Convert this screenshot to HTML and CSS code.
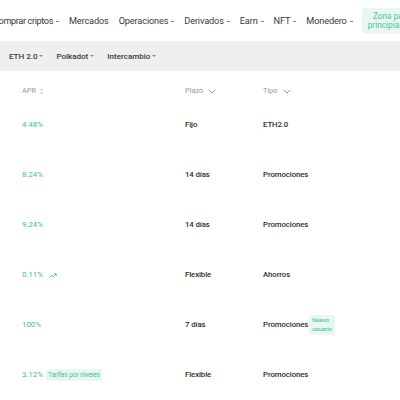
FILE: index.html
```html
<!DOCTYPE html>
<html lang="es">
<head>
    <meta charset="UTF-8">
    <meta name="viewport" content="width=device-width, initial-scale=1.0">
    <title>Earn - Staking</title>
    <link rel="stylesheet" href="styles.css">
</head>
<body>
    <header class="topnav">
        <a class="nav-item first">Comprar criptos<span class="caret"></span></a>
        <a class="nav-item">Mercados</a>
        <a class="nav-item">Operaciones<span class="caret"></span></a>
        <a class="nav-item">Derivados<span class="caret"></span></a>
        <a class="nav-item">Earn<span class="caret"></span></a>
        <a class="nav-item">NFT<span class="caret"></span></a>
        <a class="nav-item">Monedero<span class="caret"></span></a>
        <a class="beginner">Zona para<br>principiantes</a>
    </header>

    <nav class="tabs">
        <a class="tab">ETH 2.0<span class="tri"></span></a>
        <a class="tab">Polkadot<span class="tri"></span></a>
        <a class="tab">Intercambio<span class="tri"></span></a>
    </nav>

    <main class="products">
        <div class="row head">
            <div class="cell">APR
                <svg class="sort" width="5" height="7" viewBox="0 0 5 7"><path d="M2.5 0.5L4.5 2.6H0.5Z M2.5 6.5L4.5 4.4H0.5Z" fill="#cfcfcf"/></svg>
            </div>
            <div class="cell">Plazo
                <svg class="chev" width="8" height="5" viewBox="0 0 8 5"><path d="M0.7 0.8L4 4L7.3 0.8" fill="none" stroke="#999" stroke-width="1"/></svg>
            </div>
            <div class="cell">Tipo
                <svg class="chev" width="8" height="5" viewBox="0 0 8 5"><path d="M0.7 0.8L4 4L7.3 0.8" fill="none" stroke="#999" stroke-width="1"/></svg>
            </div>
        </div>

        <div class="row">
            <div class="cell apr">4.48%</div>
            <div class="cell term">Fijo</div>
            <div class="cell kind">ETH2.0</div>
        </div>
        <div class="row">
            <div class="cell apr">8.24%</div>
            <div class="cell term">14 días</div>
            <div class="cell kind">Promociones</div>
        </div>
        <div class="row">
            <div class="cell apr">9.24%</div>
            <div class="cell term">14 días</div>
            <div class="cell kind">Promociones</div>
        </div>
        <div class="row">
            <div class="cell apr">0.11%
                <svg class="trend" width="8" height="5" viewBox="0 0 8 5"><path d="M0.4 4.6L2.6 2.6L4.2 3.6L7 1M5 0.8H7.2V2.9" fill="none" stroke="#3cbd8f" stroke-width="0.9"/></svg>
            </div>
            <div class="cell term">Flexible</div>
            <div class="cell kind">Ahorros</div>
        </div>
        <div class="row">
            <div class="cell apr">100%</div>
            <div class="cell term">7 días</div>
            <div class="cell kind">Promociones <span class="badge">Nuevo<br>usuario</span></div>
        </div>
        <div class="row">
            <div class="cell apr">3.12% <span class="tag">Tarifas por niveles</span></div>
            <div class="cell term">Flexible</div>
            <div class="cell kind">Promociones</div>
        </div>
    </main>
</body>
</html>
```

FILE: styles.css
```css
body {
    font-family: Roboto, "Liberation Sans", sans-serif;
    margin: 0;
    padding: 0;
    background: #fff;
    color: #333;
    overflow: hidden;
}
a {
    color: inherit;
    text-decoration: none;
}

/* top navigation */
.topnav {
    height: 41px;
    display: flex;
    align-items: center;
    gap: 10px;
    white-space: nowrap;
    font-size: 9.2px;
    letter-spacing: -0.15px;
    color: #3a3a3a;
}
.nav-item {
    display: flex;
    align-items: center;
    gap: 3px;
}
.nav-item.first {
    margin-left: -7px;
    letter-spacing: -0.4px;
}
.caret {
    width: 3px;
    height: 1px;
    background: #888;
    margin-top: 1px;
}
.beginner {
    margin-left: -1px;
    padding: 4px 6px;
    background: #e8f8f1;
    color: #4cc49a;
    border-radius: 4px;
    font-size: 8.3px;
    line-height: 9px;
    letter-spacing: 0;
    text-align: center;
}

/* product filter tabs */
.tabs {
    height: 30px;
    background: #efefef;
    display: flex;
    align-items: center;
    gap: 13px;
    padding-left: 9px;
    font-size: 8px;
    font-weight: 500;
    color: #3a3a3a;
}
.tab {
    display: flex;
    align-items: center;
    gap: 2px;
}
.tri {
    border-left: 2px solid transparent;
    border-right: 2px solid transparent;
    border-top: 2.5px solid #8a8a8a;
}

/* products table */
.products {
    padding-left: 22px;
}
.row {
    display: grid;
    grid-template-columns: 163px 78px 1fr;
    height: 50px;
    padding-top: 13px;
    box-sizing: border-box;
    font-size: 7.8px;
    line-height: 12px;
}
.row.head {
    height: 35px;
    padding-top: 14px;
    color: #9a9a9a;
    font-size: 7.4px;
}
.cell {
    display: flex;
    align-items: center;
    gap: 3px;
    height: 12px;
}
.chev {
    margin-left: 2px;
}
.apr {
    color: #3cbd8f;
}
.term, .kind {
    color: #2e2e2e;
    font-weight: 500;
    letter-spacing: -0.1px;
}
.trend {
    margin-left: 3px;
}
.tag {
    background: #e8f8f1;
    color: #3cbd8f;
    font-size: 6.4px;
    line-height: 10px;
    padding: 1px 2px;
    border-radius: 2px;
    font-weight: normal;
}
.badge {
    background: #e8f8f1;
    color: #3cbd8f;
    font-size: 6.2px;
    line-height: 9px;
    padding: 1px 3px;
    border-radius: 2px;
    font-weight: normal;
    margin-left: -2px;
}
```
